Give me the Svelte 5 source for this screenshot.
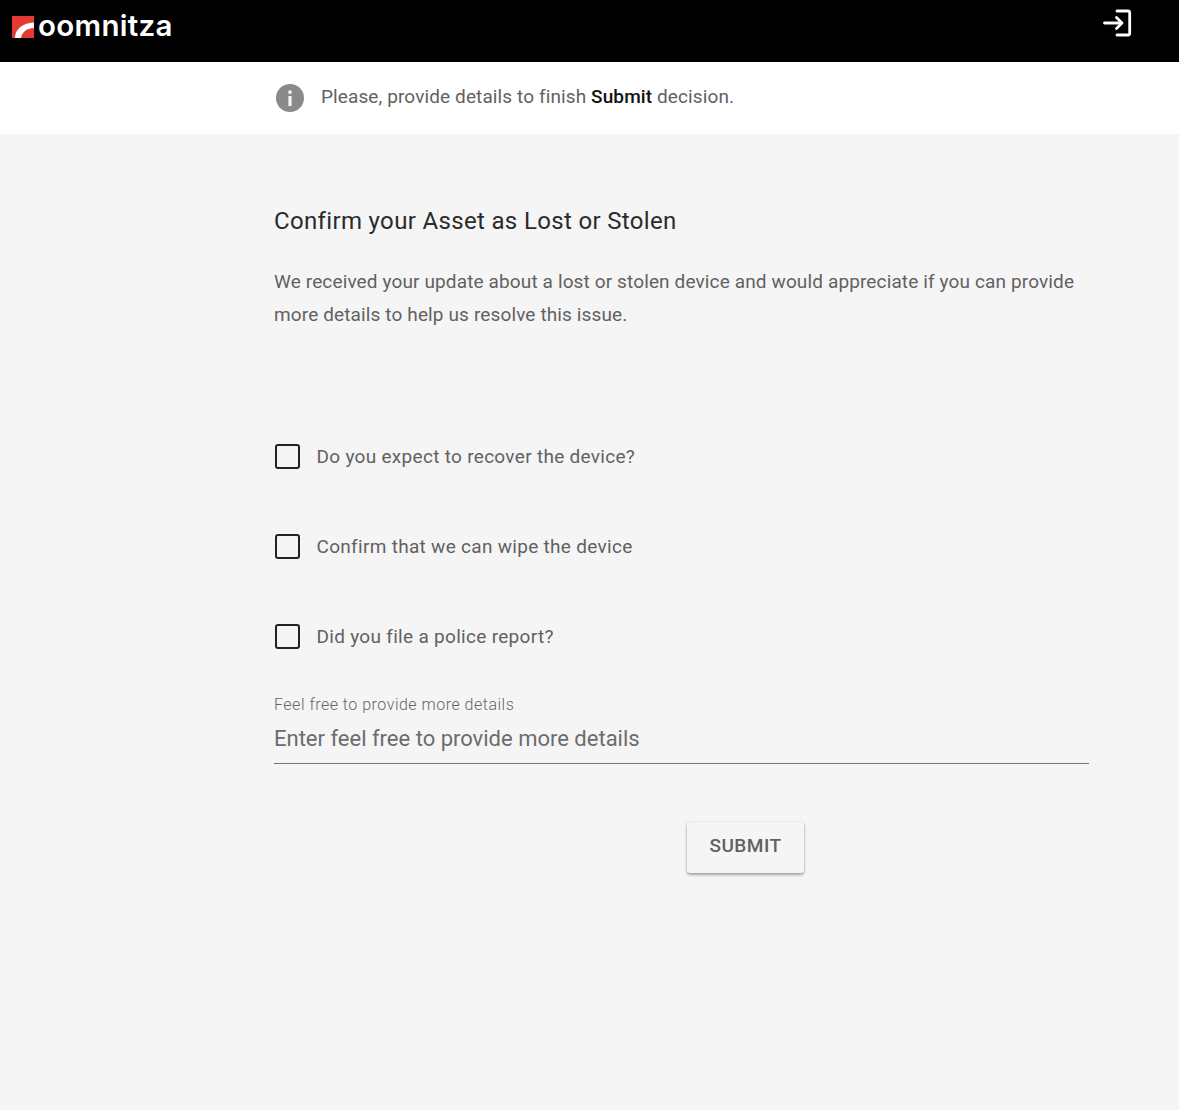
<script lang="ts">
  const questions = [
    'Do you expect to recover the device?',
    'Confirm that we can wipe the device',
    'Did you file a police report?',
  ];
  let details = $state('');
</script>

<div class="page">
  <header class="topbar">
    <div class="logo">
      <svg class="logo__mark" viewBox="0 0 22 22" width="22" height="22" aria-hidden="true">
        <rect width="22" height="22" fill="#e53935" />
        <path d="M3 22 C3 13 11 7 22 6.5 V12 C15 12 10 16 9 22 Z" fill="#fff" />
      </svg>
      <span class="logo__text">oomnitza</span>
    </div>
    <button class="logout" aria-label="Log in">
      <svg viewBox="0 0 32 28" width="32" height="28" fill="none" stroke="#fff" stroke-width="2.8" stroke-linecap="round" stroke-linejoin="round">
        <path d="M3.5 14 H20" />
        <path d="M15.5 8.5 L21 14 L15.5 19.5" />
        <path d="M16 2 H27 Q28.7 2 28.7 4 V24 Q28.7 26 27 26 H16" />
      </svg>
    </button>
  </header>

  <section class="notice">
    <div class="column notice__inner">
      <svg class="notice__icon" viewBox="0 0 28 28" width="28" height="28" aria-hidden="true">
        <circle cx="14" cy="14" r="14" fill="#8a8a8a" />
        <rect x="12.4" y="12" width="3.2" height="10" fill="#f5f5f5" />
        <rect x="12.4" y="6.5" width="3.2" height="3.2" fill="#f5f5f5" />
      </svg>
      <p>Please, provide details to finish <strong>Submit</strong> decision.</p>
    </div>
  </section>

  <main class="column content">
    <h1>Confirm your Asset as Lost or Stolen</h1>
    <p class="intro">We received your update about a lost or stolen device and would appreciate if you can provide more details to help us resolve this issue.</p>

    <div class="questions">
      {#each questions as q}
        <label class="question">
          <input type="checkbox" />
          <span>{q}</span>
        </label>
      {/each}
    </div>

    <label class="field">
      <span class="field__label">Feel free to provide more details</span>
      <input type="text" placeholder="Enter feel free to provide more details" bind:value={details} />
    </label>

    <div class="actions">
      <button class="submit">SUBMIT</button>
    </div>
  </main>
</div>

<style>
  :global(body) {
    background: #f5f5f5;
    font-family: Roboto, "Liberation Sans", sans-serif;
    color: #616161;
  }

  .page {
    min-height: 1110px;
  }

  .topbar {
    height: 62px;
    background: #000;
    display: flex;
    justify-content: space-between;
    align-items: flex-start;
    padding: 0 46px 0 12px;
  }

  .logo {
    display: flex;
    align-items: flex-start;
    gap: 4px;
    padding-top: 16px;
  }

  .logo__text {
    font-family: Inter, sans-serif;
    font-weight: 600;
    font-size: 29.5px;
    letter-spacing: 0.3px;
    color: #fff;
    line-height: 18px;
  }

  .logout {
    background: none;
    border: 0;
    padding: 0;
    margin-top: 9px;
    height: 28px;
    display: block;
  }

  .column {
    width: 815px;
    margin-left: 274px;
  }

  .notice {
    background: #fff;
    height: 72px;
    display: flex;
    align-items: center;
  }

  .notice__inner {
    display: flex;
    align-items: center;
    gap: 17px;
    padding-left: 2px;
    box-sizing: border-box;
  }

  .notice p {
    margin: 0 0 2px;
    font-size: 19px;
    line-height: 24px;
    letter-spacing: 0.11px;
  }

  .notice strong {
    font-weight: 500;
    color: #111;
  }

  .content {
    padding-top: 70px;
  }

  h1 {
    margin: 0;
    font-size: 24px;
    font-weight: 400;
    line-height: 34px;
    letter-spacing: 0.34px;
    color: #2b2b2b;
  }

  .intro {
    margin: 27px 0 0;
    font-size: 19px;
    line-height: 33px;
    letter-spacing: 0.13px;
  }

  .questions {
    margin-top: 110px;
    display: flex;
    flex-direction: column;
    gap: 60px;
  }

  .question {
    display: flex;
    align-items: center;
    height: 30px;
    gap: 16.5px;
    font-size: 19px;
    letter-spacing: 0.3px;
    padding-left: 1px;
  }

  .question input {
    appearance: none;
    margin: 0;
    width: 25px;
    height: 25px;
    box-sizing: border-box;
    border: 2px solid #222;
    border-radius: 3px;
    background: transparent;
  }

  .field {
    display: block;
    margin-top: 44px;
  }

  .field__label {
    display: block;
    font-size: 16px;
    line-height: 20px;
    letter-spacing: 0.5px;
    font-weight: 300;
    color: #666;
  }

  .field input {
    display: block;
    width: 100%;
    box-sizing: border-box;
    height: 49px;
    margin-top: 0;
    padding: 0 0 2px;
    border: 0;
    border-bottom: 1px solid #777;
    background: transparent;
    font: 400 22px Roboto, sans-serif;
    outline: none;
  }

  .field input::placeholder {
    color: #6c6c6c;
    opacity: 1;
  }

  .actions {
    margin-top: 58px;
    padding-left: 413px;
  }

  .submit {
    display: block;
    width: 117px;
    height: 51px;
    padding: 0 0 5px;
    background: #f5f5f5;
    border: 0;
    border-radius: 3px;
    box-shadow: 0 2px 3px rgba(0, 0, 0, 0.32), 0 0 2px rgba(0, 0, 0, 0.14);
    font: 500 19px Roboto, sans-serif;
    letter-spacing: 0.5px;
    color: #616161;
  }
</style>
